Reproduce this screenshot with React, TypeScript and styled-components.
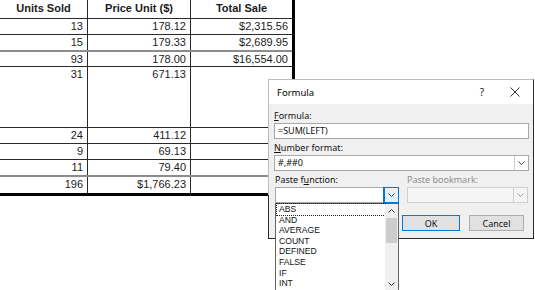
import styled, { createGlobalStyle } from "styled-components";

const GlobalStyle = createGlobalStyle`
  html, body {
    margin: 0;
    padding: 0;
    background: #fff;
  }
`;

const Page = styled.div`
  position: relative;
  width: 535px;
  height: 290px;
  overflow: hidden;
  background: #fff;
`;

/* ---------- word table ---------- */

const Sheet = styled.div`
  width: 292px;
  border-right: 3px solid #000;
  border-bottom: 3px solid #000;
  font-family: "Liberation Sans", Arial, sans-serif;
  font-size: 11px;
  color: #1b1b1b;
`;

type Sep = "thin" | "double" | "none";

const Row = styled.div<{ $h: number; $sep: Sep }>`
  display: grid;
  grid-template-columns: 88px 103px 101px;
  box-sizing: border-box;
  height: ${(p) => p.$h}px;
  border-bottom: ${(p) =>
    p.$sep === "double"
      ? "2px solid #8c8c8c"
      : p.$sep === "thin"
      ? "1px solid #2a2a2a"
      : "none"};
`;

const Cell = styled.div<{ $head?: boolean }>`
  border-right: 1px solid #2a2a2a;
  padding: ${(p) => (p.$head ? "2px 0 0" : "1px 4px 0 0")};
  text-align: ${(p) => (p.$head ? "center" : "right")};
  font-weight: ${(p) => (p.$head ? 700 : 400)};
  line-height: 13px;
  white-space: nowrap;
  &:last-child {
    border-right: none;
  }
`;

const rows: { cells: string[]; h: number; sep: Sep }[] = [
  { cells: ["13", "178.12", "$2,315.56"], h: 16, sep: "thin" },
  { cells: ["15", "179.33", "$2,689.95"], h: 17, sep: "double" },
  { cells: ["93", "178.00", "$16,554.00"], h: 15, sep: "thin" },
  { cells: ["31", "671.13", ""], h: 61, sep: "thin" },
  { cells: ["24", "411.12", ""], h: 16, sep: "thin" },
  { cells: ["9", "69.13", ""], h: 16, sep: "thin" },
  { cells: ["11", "79.40", ""], h: 17, sep: "double" },
  { cells: ["196", "$1,766.23", ""], h: 16, sep: "none" },
];

/* ---------- formula dialog ---------- */

const Dialog = styled.div`
  position: absolute;
  left: 268px;
  top: 79px;
  width: 266px;
  height: 160px;
  box-sizing: border-box;
  border: 1px solid #bdbdbd;
  border-right-color: #2b2b2b;
  border-bottom-color: #2b2b2b;
  background: #f0f0f0;
  font-family: "Noto Sans", "Open Sans", sans-serif;
  font-size: 9px;
  color: #111;
  &::after {
    content: "";
    position: absolute;
    left: -1px;
    top: 115px;
    bottom: -1px;
    width: 1px;
    background: #2b2b2b;
  }
`;

const TitleBar = styled.div`
  display: flex;
  align-items: center;
  height: 24px;
  padding-left: 8px;
  background: #fff;
`;

const Title = styled.div`
  flex: 1;
  font-size: 9.5px;
  color: #000;
`;

const TitleButton = styled.div<{ $w: number }>`
  width: ${(p) => p.$w}px;
  height: 24px;
  display: flex;
  align-items: center;
  justify-content: center;
  font-size: 10px;
  color: #222;
`;

const Body = styled.div`
  display: flex;
  flex-direction: column;
  padding: 6px 4px 0 5px;
`;

const Label = styled.div<{ $gap?: number; $disabled?: boolean }>`
  height: 12px;
  line-height: 12px;
  margin-top: ${(p) => p.$gap ?? 0}px;
  margin-bottom: 1px;
  color: ${(p) => (p.$disabled ? "#8e8e8e" : "#111")};
  white-space: nowrap;
  u {
    text-decoration: underline;
    text-underline-offset: 1px;
  }
`;

const Field = styled.div<{ $disabled?: boolean }>`
  position: relative;
  display: flex;
  align-items: center;
  height: 16px;
  box-sizing: border-box;
  border: 1px solid ${(p) => (p.$disabled ? "#cfcfcf" : "#a9a9a9")};
  background: ${(p) => (p.$disabled ? "#f5f5f5" : "#fff")};
  padding-left: 3px;
  color: #111;
`;

const FieldText = styled.span`
  flex: 1;
  line-height: 14px;
`;

const DropButton = styled.div<{ $active?: boolean; $disabled?: boolean }>`
  width: 14px;
  height: 14px;
  box-sizing: border-box;
  display: flex;
  align-items: center;
  justify-content: center;
  border-left: 1px solid ${(p) => (p.$active ? "#0078d7" : "#cfcfcf")};
  background: ${(p) => (p.$active ? "#e5f1fb" : "transparent")};
  outline: ${(p) => (p.$active ? "1px solid #0078d7" : "none")};
  color: ${(p) => (p.$disabled ? "#9a9a9a" : "#444")};
`;

const PasteGrid = styled.div`
  display: grid;
  grid-template-columns: 124px 121px;
  column-gap: 8px;
  margin-left: 1px;
`;

const Buttons = styled.div`
  display: flex;
  justify-content: flex-end;
  gap: 9px;
  margin-top: 12px;
  margin-right: 5px;
`;

const Button = styled.div<{ $w: number; $primary?: boolean }>`
  width: ${(p) => p.$w}px;
  height: 16px;
  box-sizing: border-box;
  display: flex;
  align-items: center;
  justify-content: center;
  background: #e1e1e1;
  border: 1px solid ${(p) => (p.$primary ? "#0078d7" : "#adadad")};
  color: #111;
`;

const ListBox = styled.div`
  position: absolute;
  left: -1px;
  top: 15px;
  width: 124px;
  height: 89px;
  box-sizing: border-box;
  display: flex;
  border: 1px solid #646464;
  background: #fff;
  z-index: 2;
`;

const Items = styled.div`
  flex: 1;
  padding-left: 1px;
`;

const Item = styled.div<{ $focus?: boolean }>`
  height: 10.6px;
  line-height: 10.6px;
  padding-left: 2px;
  box-sizing: border-box;
  font-family: "Liberation Sans", Arial, sans-serif;
  font-size: 8.6px;
  outline: ${(p) => (p.$focus ? "1px dotted #222" : "none")};
  color: #111;
`;

const Scrollbar = styled.div`
  width: 13px;
  display: flex;
  flex-direction: column;
  background: #f0f0f0;
`;

const ScrollArrow = styled.div`
  height: 14px;
  display: flex;
  align-items: center;
  justify-content: center;
  color: #333;
`;

const Thumb = styled.div`
  height: 25px;
  margin: 0 1px;
  background: #cdcdcd;
`;

const Track = styled.div`
  flex: 1;
`;

function Chevron({ up }: { up?: boolean }) {
  return (
    <svg width="7" height="4" viewBox="0 0 7 4">
      <polyline
        points={up ? "0.5,3.5 3.5,0.5 6.5,3.5" : "0.5,0.5 3.5,3.5 6.5,0.5"}
        fill="none"
        stroke="currentColor"
        strokeWidth="1"
      />
    </svg>
  );
}

function CloseIcon() {
  return (
    <svg width="10" height="10" viewBox="0 0 10 10">
      <path d="M0.5 0.5 L9.5 9.5 M9.5 0.5 L0.5 9.5" stroke="#333" strokeWidth="1" />
    </svg>
  );
}

const functions = ["ABS", "AND", "AVERAGE", "COUNT", "DEFINED", "FALSE", "IF", "INT"];

export default function App() {
  return (
    <Page>
      <GlobalStyle />
      <Sheet>
        <Row $h={19} $sep="thin">
          <Cell $head>Units Sold</Cell>
          <Cell $head>Price Unit ($)</Cell>
          <Cell $head>Total Sale</Cell>
        </Row>
        {rows.map((r, i) => (
          <Row key={i} $h={r.h} $sep={r.sep}>
            {r.cells.map((c, j) => (
              <Cell key={j}>{c}</Cell>
            ))}
          </Row>
        ))}
      </Sheet>

      <Dialog>
        <TitleBar>
          <Title>Formula</Title>
          <TitleButton $w={30}>?</TitleButton>
          <TitleButton $w={36}>
            <CloseIcon />
          </TitleButton>
        </TitleBar>
        <Body>
          <Label>
            <u>F</u>ormula:
          </Label>
          <Field>
            <FieldText>=SUM(LEFT)</FieldText>
          </Field>
          <Label $gap={3}>
            <u>N</u>umber format:
          </Label>
          <Field>
            <FieldText>#,##0</FieldText>
            <DropButton>
              <Chevron />
            </DropButton>
          </Field>
          <PasteGrid>
            <Label $gap={3}>
              Paste f<u>u</u>nction:
            </Label>
            <Label $gap={3} $disabled>
              Paste bookmark:
            </Label>
            <Field>
              <FieldText />
              <DropButton $active>
                <Chevron />
              </DropButton>
              <ListBox>
                <Items>
                  {functions.map((f, i) => (
                    <Item key={f} $focus={i === 0}>
                      {f}
                    </Item>
                  ))}
                </Items>
                <Scrollbar>
                  <ScrollArrow>
                    <Chevron up />
                  </ScrollArrow>
                  <Thumb />
                  <Track />
                  <ScrollArrow>
                    <Chevron />
                  </ScrollArrow>
                </Scrollbar>
              </ListBox>
            </Field>
            <Field $disabled>
              <FieldText />
              <DropButton $disabled>
                <Chevron />
              </DropButton>
            </Field>
          </PasteGrid>
          <Buttons>
            <Button $w={58} $primary>
              OK
            </Button>
            <Button $w={55}>Cancel</Button>
          </Buttons>
        </Body>
      </Dialog>
    </Page>
  );
}
